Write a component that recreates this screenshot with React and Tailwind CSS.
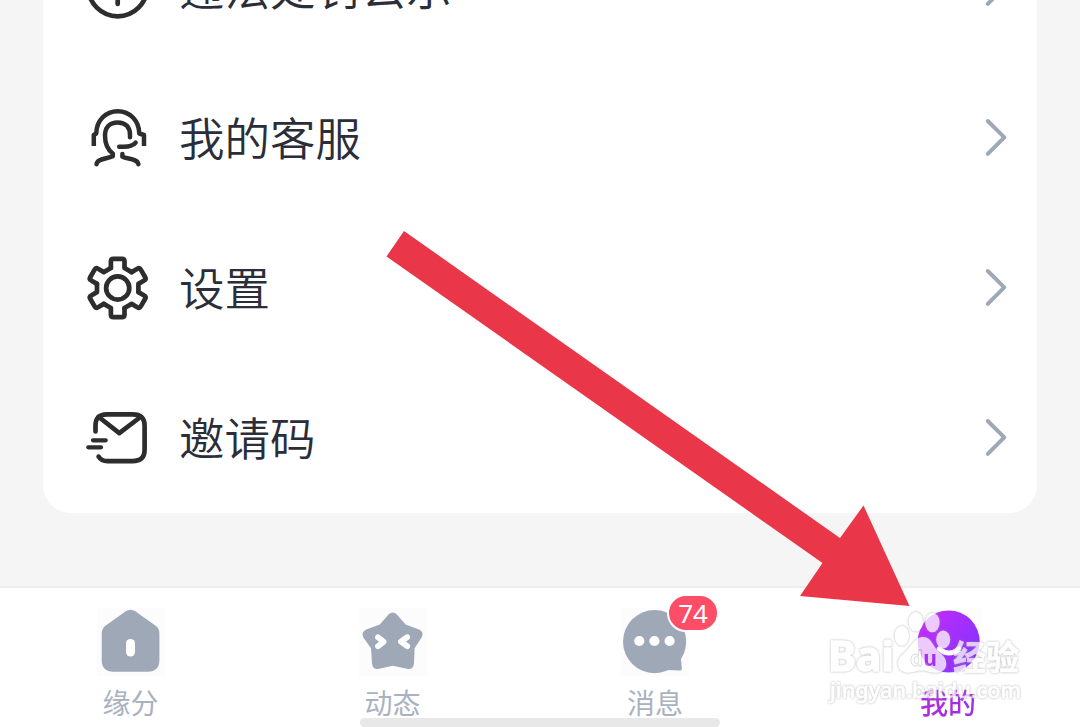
import React from "react";

const WarningIcon = () => (
  <svg viewBox="0 0 68 68" className="w-[68px] h-[68px] shrink-0" fill="none" stroke="#2d2d2d" strokeWidth="4.7" strokeLinecap="round">
    <circle cx="33.7" cy="32.8" r="29.5" />
    <path d="M33.7 28V50" />
  </svg>
);

const ServiceIcon = () => (
  <svg viewBox="0 0 68 68" className="w-[68px] h-[68px] shrink-0" fill="none" stroke="#2d2d2d" strokeWidth="4.5" strokeLinejoin="round">
    <path d="M9.8 42V31L12.2 29.5C12.5 16.5 21.5 7.2 33.7 7.2S55 16.5 55.3 29.5L60 31V42" />
    <path strokeLinecap="round" d="M12.6 60.2C13 54.5 23 55 28.8 52.3V49.5C24 46 21 39 21 31.5C21 23 26 18.4 33.7 18.4S46 23 46 31V33.2" />
    <path strokeLinecap="round" d="M35.2 42.7H40C45 42.7 48.5 42 51.6 38.7" />
    <path strokeLinecap="round" d="M38.4 50V52.8C44 55.2 53.5 54.5 54.4 60.2" />
  </svg>
);

const SettingsIcon = () => (
  <svg viewBox="0 0 68 68" className="w-[68px] h-[68px] shrink-0" fill="none" stroke="#2d2d2d" strokeWidth="4.7" strokeLinecap="round" strokeLinejoin="round">
    <circle cx="33.7" cy="34" r="11.6" />
    {[0, 60, 120, 180, 240, 300].map((deg) => (
      <path
        key={deg}
        transform={`translate(33.7 34) rotate(${deg})`}
        d="M-6.8 -20V-26.6Q-6.8 -29.2 -4.4 -29.2H4.4Q6.8 -29.2 6.8 -26.6V-20L13.9 -15.9"
      />
    ))}
  </svg>
);

const InviteIcon = () => (
  <svg viewBox="0 0 68 68" className="w-[68px] h-[68px] shrink-0" fill="none" stroke="#2d2d2d" strokeWidth="4.7" strokeLinecap="round" strokeLinejoin="round">
    <path d="M11.5 27.5V22C11.5 14 15 10.4 23 10.4H48.5C56.8 10.4 60.6 14 60.6 22V45.5C60.6 53.5 56.8 57.1 48.5 57.1H23.5C19 57.1 16.5 55.8 14.6 52.6" />
    <path d="M14.8 13L35.3 29.2L56.5 13" />
    <path strokeWidth="4.3" d="M9 36.3H21.7M4.3 43.3H17" />
  </svg>
);

const Chevron = () => (
  <svg viewBox="0 0 24 40" className="w-6 h-10 shrink-0" fill="none" stroke="#9fa8b7" strokeWidth="4" strokeLinecap="round" strokeLinejoin="round">
    <path d="M3.8 3L20.3 19.4L3.8 35.8" />
  </svg>
);

const menu = [
  { label: "违法处罚公示", Icon: WarningIcon },
  { label: "我的客服", Icon: ServiceIcon },
  { label: "设置", Icon: SettingsIcon },
  { label: "邀请码", Icon: InviteIcon },
];

const HomeIcon = () => (
  <svg viewBox="0 0 68 68" className="w-[68px] h-[68px] bg-[#fcfcfc]">
    <path fill="#9fa8b7" d="M28.8 3.2Q33.5 .2 38.2 3.2L58.3 17.6Q62.4 20.6 62.4 25.5V52Q62.4 63.7 50.7 63.7H16.4Q4.7 63.7 4.7 52V25.5Q4.7 20.6 8.8 17.6Z" />
    <rect x="29" y="31" width="9" height="17.5" rx="4.5" fill="#fff" />
  </svg>
);

const StarIcon = () => (
  <svg viewBox="0 0 68 68" className="w-[68px] h-[68px] bg-[#fcfcfc]">
    <path
      fill="#9fa8b7"
      d="M29.5 6.6Q33.7 2.2 37.9 6.6L46.6 16.6L60 21.6Q65.6 24.2 62.6 29.4L55.6 40.3L55 55.5Q54.4 62 48 60.8L33.7 57.8L20 60.8Q13.6 62 13 55.5L12 40.3L4.4 29.4Q1.8 24.2 7.2 21.6L20.8 16.6Z"
    />
    <path d="M19 29.2L24.6 33.7L19 38.2M48.2 29.2L42 33.7L48.2 38.2" fill="none" stroke="#fff" strokeWidth="5.8" strokeLinecap="round" strokeLinejoin="round" />
  </svg>
);

const ChatIcon = () => (
  <svg viewBox="0 0 68 68" className="w-[68px] h-[68px] bg-[#fcfcfc]">
    <circle cx="33.6" cy="33.6" r="31.6" fill="#9fa8b7" />
    <path d="M46 62L58.5 62.6Q61 62.6 60.8 60.5L59.8 49Z" fill="#9fa8b7" />
    <circle cx="18.3" cy="33" r="5.1" fill="#fff" />
    <circle cx="33.4" cy="33" r="5.1" fill="#fff" />
    <circle cx="48.6" cy="33" r="5.1" fill="#fff" />
  </svg>
);

const MineIcon = () => (
  <svg viewBox="0 0 68 68" className="w-[68px] h-[68px] bg-[#fdfdfd]">
    <defs>
      <linearGradient id="mine" x1="0" y1="0.2" x2="1" y2="0.8">
        <stop offset="0" stopColor="#c42bfb" />
        <stop offset="1" stopColor="#8433fd" />
      </linearGradient>
    </defs>
    <circle cx="34.7" cy="33.5" r="31" fill="url(#mine)" />
    <path d="M25 41Q35 49 45 41" fill="none" stroke="#fff" strokeWidth="5" strokeLinecap="round" />
  </svg>
);

const tabs = [
  { label: "缘分", Icon: HomeIcon, box: "w-[261px]" },
  { label: "动态", Icon: StarIcon, box: "w-[263px]" },
  { label: "消息", Icon: ChatIcon, box: "w-[262px]", badge: 74 },
  { label: "我的", Icon: MineIcon, box: "w-[294px] pl-[30px]", active: true },
];

const Watermark = () => (
  <svg viewBox="0 0 204 98" className="absolute left-[824px] top-[608px] w-[204px] h-[98px] opacity-75">
    <g fill="#fff" className="drop-shadow-[0_0_1px_#999]">
      <ellipse cx="77.8" cy="27.7" rx="7.3" ry="10" />
      <ellipse cx="91.7" cy="13.7" rx="7.2" ry="9.8" />
      <ellipse cx="108.4" cy="14.5" rx="7.2" ry="9.8" />
      <ellipse cx="119.2" cy="31.5" rx="7" ry="9" />
      <path d="M98 29C90 30 87 39 80 45C71 51 72 63 82 64.5C89 65.5 92 62.5 98 62.5S108 66 115 64.5C125 62 124 50 116 45C109 40 108 28 98 29Z" />
    </g>
    <g fill="#fff" stroke="#fff" strokeLinejoin="round" className="drop-shadow-[0_0_1px_#999] font-['Noto_Sans','Noto_Sans_CJK_SC',sans-serif]">
      <text x="4" y="63" fontSize="41" fontWeight="700" strokeWidth="1.5" textLength="66" lengthAdjust="spacingAndGlyphs">Bai</text>
      <text x="129" y="61.5" fontSize="34" fontWeight="700" strokeWidth="0.6" textLength="66" lengthAdjust="spacingAndGlyphs">经验</text>
      <text x="6" y="90" fontSize="21" fontWeight="500" strokeWidth="0.6" textLength="191" lengthAdjust="spacingAndGlyphs">jingyan.baidu.com</text>
    </g>
    <text x="86" y="58" fontSize="22" fontWeight="700" textLength="27" lengthAdjust="spacingAndGlyphs" fill="#fff" stroke="#ccc" strokeWidth="0.8" className="font-['Noto_Sans',sans-serif]">
      d<tspan fill="#a92df5" stroke="none">u</tspan>
    </text>
  </svg>
);

const App = () => {
  return (
    <div className="relative w-[1080px] h-[727px] overflow-hidden bg-[#f5f5f5] flex flex-col justify-between font-['Noto_Sans_CJK_SC',sans-serif]">

      {/* Menu */}
      <div className="mx-[43px] h-[513px] bg-white rounded-b-[28px] overflow-hidden flex flex-col justify-end">
        {menu.map(({ label, Icon }) => (
          <div key={label} className="h-[150px] shrink-0 flex items-center pl-[41px] pr-[29px]">
            <Icon />
            <span className="ml-[27px] mb-1 flex-1 text-[45.5px] leading-[60px] font-[350] text-[#2b2e38]">{label}</span>
            <Chevron />
          </div>
        ))}
      </div>

      {/* Tab bar */}
      <div className="h-[141px] bg-white border-t-2 border-[#ececec] flex pt-5">
        {tabs.map(({ label, Icon, box, badge, active }) => (
          <div key={label} className={`${box} shrink-0 flex flex-col items-center`}>
            <div className="relative">
              <Icon />
              {badge && (
                <span className="absolute left-[46px] -top-[14px] w-[52px] h-[38px] rounded-full border-2 border-white bg-[#fd4d67] text-white text-[26px] leading-[35px] text-center font-['Noto_Sans',sans-serif]">
                  {badge}
                </span>
              )}
            </div>
            <span
              className={
                active
                  ? "mt-1.5 text-[28px] leading-10 font-medium text-transparent bg-clip-text bg-linear-to-r from-[#b42cdf] to-[#9b30e0]"
                  : "mt-1.5 text-[28px] leading-10 text-[#a9b2c0]"
              }
            >
              {label}
            </span>
          </div>
        ))}
      </div>

      {/* Home indicator */}
      <div className="absolute left-[360px] top-[718px] w-[360px] h-[9px] rounded-full bg-[#e8e8e8]" />

      <Watermark />

      {/* Pointer arrow */}
      <svg viewBox="0 0 524 376" className="absolute left-[386px] top-[231px] w-[524px] h-[376px]">
        <path d="M18 0L454 307L477.5 274.5L523.5 375L414 365L436.5 332L.5 25.5Z" fill="#e93648" />
      </svg>
    </div>
  );
};

export default App;
